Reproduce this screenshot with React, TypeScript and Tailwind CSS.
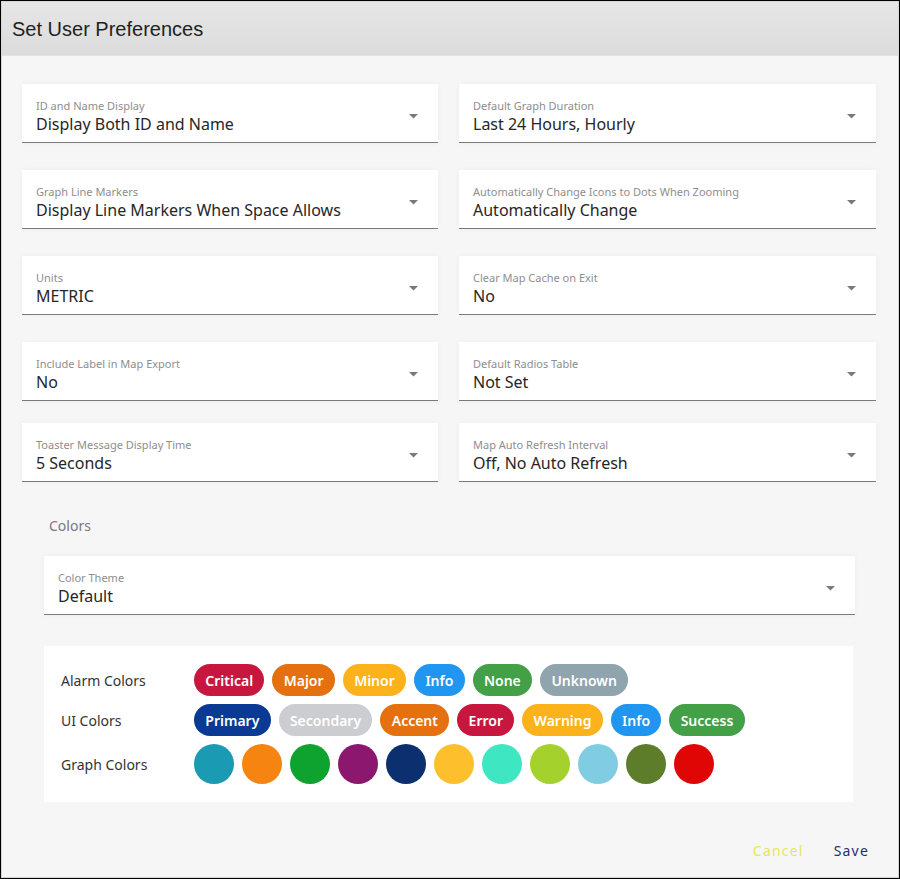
import React from "react";

const font = { fontFamily: '"Noto Sans", "Open Sans", sans-serif' };

function Arrow() {
  return (
    <svg width="9" height="5" viewBox="0 0 9 5" className="shrink-0">
      <path d="M0 0 L9 0 L4.5 4.5 Z" fill="#7a7a7a" />
    </svg>
  );
}

function Field({ label, value, arrowPad = "pr-[20px]" }: { label: string; value: string; arrowPad?: string }) {
  return (
    <div className={`flex h-[59px] items-center justify-between border-b border-[#7a7a7a] bg-white pl-[14px] ${arrowPad} shadow-[0_0_6px_rgba(0,0,0,0.04)]`}>
      <div className="flex flex-col pt-[7px]">
        <span className="text-[11px] leading-[14px] text-[#8e8e8e]">{label}</span>
        <span className="text-[16px] leading-[22px] text-[#262626]">{value}</span>
      </div>
      <div className="mt-[6px]">
        <Arrow />
      </div>
    </div>
  );
}

const alarm = [
  ["Critical", "#c8173f"],
  ["Major", "#e4700f"],
  ["Minor", "#fcb21b"],
  ["Info", "#2196f0"],
  ["None", "#43a047"],
  ["Unknown", "#90a4ae"],
];
const ui = [
  ["Primary", "#0b3a94"],
  ["Secondary", "#cbcdd0"],
  ["Accent", "#e4700f"],
  ["Error", "#c8173f"],
  ["Warning", "#fcb21b"],
  ["Info", "#2196f0"],
  ["Success", "#43a047"],
];
const graph = [
  "#1a9ab3",
  "#f58410",
  "#0ea32f",
  "#8c176f",
  "#0c2f70",
  "#fdc02c",
  "#3fe6c2",
  "#a5d12c",
  "#80cce2",
  "#5e7d2b",
  "#e00606",
];

function Chip({ text, color }: { text: string; color: string }) {
  return (
    <span
      className="inline-flex h-[32px] items-center rounded-full px-[11.3px] text-[14px] font-semibold text-white"
      style={{ backgroundColor: color }}
    >
      {text}
    </span>
  );
}

export default function App() {
  const rows: [string, string, string, string][] = [
    ["ID and Name Display", "Display Both ID and Name", "Default Graph Duration", "Last 24 Hours, Hourly"],
    ["Graph Line Markers", "Display Line Markers When Space Allows", "Automatically Change Icons to Dots When Zooming", "Automatically Change"],
    ["Units", "METRIC", "Clear Map Cache on Exit", "No"],
    ["Include Label in Map Export", "No", "Default Radios Table", "Not Set"],
    ["Toaster Message Display Time", "5 Seconds", "Map Auto Refresh Interval", "Off, No Auto Refresh"],
  ];
  const gaps = ["mt-0", "mt-[27px]", "mt-[27px]", "mt-[27px]", "mt-[22px]"];
  return (
    <div className="h-[879px] w-[900px] overflow-hidden border border-black bg-white" style={font}>
      <div className="flex h-full flex-col border border-[#d6d6d6] bg-[#f6f6f7]">
        <div
          className="flex h-[54px] shrink-0 items-center border-b border-[#e2e2e2] bg-gradient-to-b from-[#e6e6e6] to-[#dcdcdc] pl-[10px] text-[20px] text-[#1f1f1f]"
          style={{ fontFamily: '"Liberation Sans", Arial, sans-serif' }}
        >
          Set User Preferences
        </div>
        <div className="flex flex-1 flex-col px-[20px] pt-[28px]">
          {rows.map((r, i) => (
            <div key={i} className={`grid grid-cols-[416px_417px] gap-x-[21px] ${gaps[i]}`}>
              <Field label={r[0]} value={r[1]} />
              <Field label={r[2]} value={r[3]} />
            </div>
          ))}
          <div className="mt-[33px] pl-[27px] text-[14px] text-[#7a7a7a]">Colors</div>
          <div className="ml-[22px] mt-[20px] w-[811px]">
            <Field label="Color Theme" value="Default" arrowPad="pr-[20px]" />
          </div>
          <div className="ml-[22px] mt-[31px] flex h-[156px] w-[809px] flex-col bg-white pl-[17px] pt-[18px]">
            <div className="flex items-center">
              <span className="w-[133px] text-[14px] text-[#333]">Alarm Colors</span>
              <div className="flex gap-[8px]">
                {alarm.map(([t, c]) => (
                  <Chip key={t} text={t} color={c} />
                ))}
              </div>
            </div>
            <div className="mt-[8px] flex items-center">
              <span className="w-[133px] text-[14px] text-[#333]">UI Colors</span>
              <div className="flex gap-[8px]">
                {ui.map(([t, c]) => (
                  <Chip key={t} text={t} color={c} />
                ))}
              </div>
            </div>
            <div className="mt-[8px] flex items-center">
              <span className="w-[133px] text-[14px] text-[#333]">Graph Colors</span>
              <div className="flex gap-[8px]">
                {graph.map((c) => (
                  <span key={c} className="h-[40px] w-[40px] rounded-full" style={{ backgroundColor: c }} />
                ))}
              </div>
            </div>
          </div>
          <div className="mt-auto flex justify-end gap-[30px] pb-[16px] pr-[9px] text-[14px] tracking-[1.2px]">
            <span className="text-[#e6e65a]">Cancel</span>
            <span className="text-[#2c2d66]">Save</span>
          </div>
        </div>
      </div>
    </div>
  );
}
